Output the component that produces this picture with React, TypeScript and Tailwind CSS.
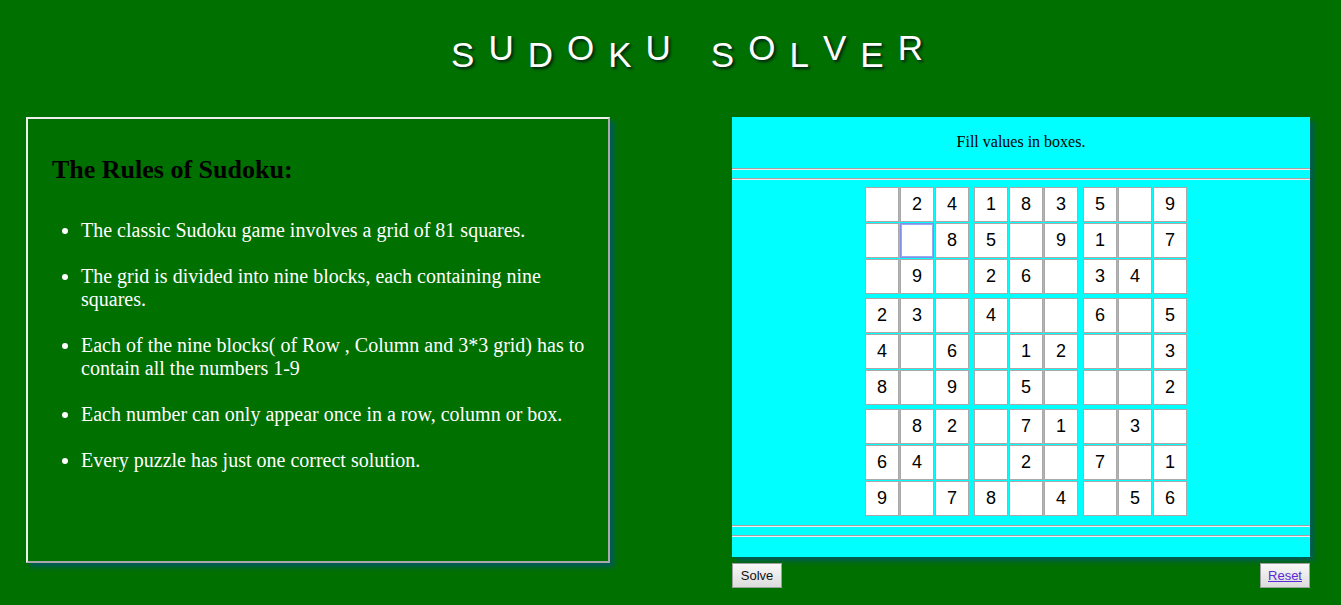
const puzzle: string[] = [
  '.241835.9',
  '..85.91.7',
  '.9.26.34.',
  '23.4..6.5',
  '4.6.12..3',
  '8.9.5...2',
  '.82.71.3.',
  '64..2.7.1',
  '9.78.4.56',
];

const titleWords = ['SUDOKU', 'SOLVER'];

const rules = [
  'The classic Sudoku game involves a grid of 81 squares.',
  'The grid is divided into nine blocks, each containing nine squares.',
  'Each of the nine blocks( of Row , Column and 3*3 grid) has to contain all the numbers 1-9',
  'Each number can only appear once in a row, column or box.',
  'Every puzzle has just one correct solution.',
];

function Title() {
  let idx = 0;
  return (
    <div className="flex items-start justify-center pt-[30px] pl-[33px] gap-[40px]">
      {titleWords.map((word) => (
        <div key={word} className="flex items-start gap-[14px]">
          {word.split('').map((ch, i) => {
            const low = idx++ % 2 === 0;
            return (
              <span
                key={i}
                className={
                  'block text-[35px] leading-[35px] text-white font-["Liberation_Sans",Arial,sans-serif] [text-shadow:2px_2px_3px_rgba(0,0,30,0.75)] ' +
                  (low ? 'mt-[7px]' : 'mt-0')
                }
              >
                {ch}
              </span>
            );
          })}
        </div>
      ))}
    </div>
  );
}

function Cell({ value, focused }: { value: string; focused: boolean }) {
  return (
    <div
      className={
        'w-[34px] h-[35px] bg-white border flex items-center justify-center text-[18px] text-black font-["Liberation_Sans",Arial,sans-serif] ' +
        (focused ? 'border-[#7f8fe6] shadow-[inset_0_0_0_1px_#9aa8ee]' : 'border-[#a9a9a9]')
      }
    >
      {value === '.' ? '' : value}
    </div>
  );
}

function Block({ br, bc }: { br: number; bc: number }) {
  const cells = [];
  for (let r = 0; r < 3; r++) {
    for (let c = 0; c < 3; c++) {
      const row = br * 3 + r;
      const col = bc * 3 + c;
      cells.push(
        <Cell key={`${r}-${c}`} value={puzzle[row][col]} focused={row === 1 && col === 1} />
      );
    }
  }
  return <div className="grid grid-cols-[repeat(3,34px)] gap-x-[1px] gap-y-[1px]">{cells}</div>;
}

function Rule() {
  return <div className="h-0 border-t border-t-[#a3a3a3] border-b border-b-[#eeeeee]" />;
}

export default function App() {
  return (
    <div className="min-h-screen w-full bg-[#007000]">
      <Title />

      <div className="flex justify-between pl-[26px] pr-[31px] mt-[45px]">
        {/* rules panel */}
        <div className="w-[584px] h-[446px] border-2 border-t-[#eeeeee] border-l-[#eeeeee] border-r-[#a9a9a9] border-b-[#a9a9a9] shadow-[4px_4px_5px_#005a5a] pl-[24px] pr-[16px] pt-[36px]">
          <h2 className="text-[26px] leading-[30px] font-bold text-black font-['Liberation_Serif','Times_New_Roman',serif]">
            The Rules of Sudoku:
          </h2>
          <ul className="list-disc pl-[29px] mt-[34px] text-[20px] leading-[23px] text-white font-['Liberation_Serif','Times_New_Roman',serif]">
            {rules.map((r) => (
              <li key={r} className="mb-[23px]">
                {r}
              </li>
            ))}
          </ul>
        </div>

        {/* solver */}
        <div className="w-[578px]">
          <div className="h-[440px] bg-[#00ffff] shadow-[4px_4px_5px_#005a5a] pt-[16px]">
            <p className="text-center text-[16px] leading-[18px] text-black font-['Liberation_Serif','Times_New_Roman',serif]">
              Fill values in boxes.
            </p>
            <div className="mt-[17px]">
              <Rule />
            </div>
            <div className="mt-[8px]">
              <Rule />
            </div>
            <div className="flex justify-center pl-[10px] mt-[7px]">
              <div className="flex flex-col gap-[4px]">
                {[0, 1, 2].map((br) => (
                  <div key={br} className="flex gap-[5px]">
                    {[0, 1, 2].map((bc) => (
                      <Block key={bc} br={br} bc={bc} />
                    ))}
                  </div>
                ))}
              </div>
            </div>
            <div className="mt-[9px]">
              <Rule />
            </div>
            <div className="mt-[8px]">
              <Rule />
            </div>
          </div>

          <div className="flex justify-between mt-[6px]">
            <button className="w-[50px] h-[25px] border border-[#a0a0a0] bg-gradient-to-b from-[#f8f8f8] to-[#dcdcdc] text-[13px] text-[#111] font-['Liberation_Sans',Arial,sans-serif]">
              Solve
            </button>
            <button className="w-[50px] h-[25px] border border-[#a0a0a0] bg-gradient-to-b from-[#f8f8f8] to-[#dcdcdc] text-[13px] font-['Liberation_Sans',Arial,sans-serif]">
              <a href="#" className="underline text-[#5a2bd4]">
                Reset
              </a>
            </button>
          </div>
        </div>
      </div>
    </div>
  );
}
